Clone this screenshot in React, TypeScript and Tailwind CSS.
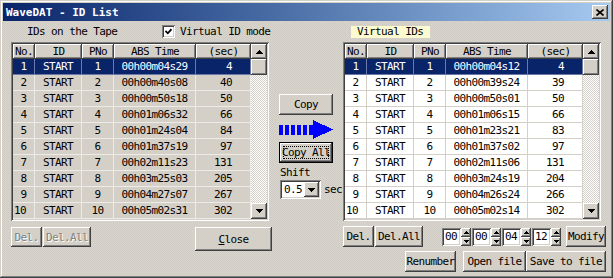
import React from "react";

const FONT = "font-['DejaVu_Sans_Mono',monospace] text-[11px] tracking-[-0.6px] leading-none whitespace-nowrap";
const RAISED =
  "shadow-[inset_-1px_-1px_#404040,inset_1px_1px_#ffffff,inset_-2px_-2px_#808080,inset_2px_2px_#d4d0c8]";
const SUNKEN =
  "shadow-[inset_1px_1px_#808080,inset_-1px_-1px_#ffffff,inset_2px_2px_#404040,inset_-2px_-2px_#d4d0c8]";
const CHECKER = "bg-[image:repeating-conic-gradient(#ffffff_0_25%,#d4d0c8_0_50%)] bg-[length:2px_2px]";
const DITHER = "bg-[image:repeating-conic-gradient(#d9d6cf_0_25%,#cfcbc3_0_50%)] bg-[length:2px_2px]";

const COLW = ["w-[22px]", "w-[47px]", "w-[32px]", "w-[82px]", "w-[55px]"];
const HEADERS = ["No.", "ID", "PNo", "ABS Time", "(sec)"];

type Row = [string, string, string, string, string];

const LEFT: Row[] = [
  ["1", "START", "1", "00h00m04s29", "4"],
  ["2", "START", "2", "00h00m40s08", "40"],
  ["3", "START", "3", "00h00m50s18", "50"],
  ["4", "START", "4", "00h01m06s32", "66"],
  ["5", "START", "5", "00h01m24s04", "84"],
  ["6", "START", "6", "00h01m37s19", "97"],
  ["7", "START", "7", "00h02m11s23", "131"],
  ["8", "START", "8", "00h03m25s03", "205"],
  ["9", "START", "9", "00h04m27s07", "267"],
  ["10", "START", "10", "00h05m02s31", "302"],
];

const RIGHT: Row[] = [
  ["1", "START", "1", "00h00m04s12", "4"],
  ["2", "START", "2", "00h00m39s24", "39"],
  ["3", "START", "3", "00h00m50s01", "50"],
  ["4", "START", "4", "00h01m06s15", "66"],
  ["5", "START", "5", "00h01m23s21", "83"],
  ["6", "START", "6", "00h01m37s02", "97"],
  ["7", "START", "7", "00h02m11s06", "131"],
  ["8", "START", "8", "00h03m24s19", "204"],
  ["9", "START", "9", "00h04m26s24", "266"],
  ["10", "START", "10", "00h05m02s14", "302"],
];

function UpTri() {
  return (
    <svg width="7" height="4" shapeRendering="crispEdges">
      <rect x="3" y="0" width="1" height="1" fill="#000" />
      <rect x="2" y="1" width="3" height="1" fill="#000" />
      <rect x="1" y="2" width="5" height="1" fill="#000" />
      <rect x="0" y="3" width="7" height="1" fill="#000" />
    </svg>
  );
}
function DownTri() {
  return (
    <svg width="7" height="4" shapeRendering="crispEdges">
      <rect x="0" y="0" width="7" height="1" fill="#000" />
      <rect x="1" y="1" width="5" height="1" fill="#000" />
      <rect x="2" y="2" width="3" height="1" fill="#000" />
      <rect x="3" y="3" width="1" height="1" fill="#000" />
    </svg>
  );
}
function SmallTri({ down }: { down?: boolean }) {
  return (
    <svg width="5" height="3" shapeRendering="crispEdges">
      {down ? (
        <>
          <rect x="0" y="0" width="5" height="1" fill="#000" />
          <rect x="1" y="1" width="3" height="1" fill="#000" />
          <rect x="2" y="2" width="1" height="1" fill="#000" />
        </>
      ) : (
        <>
          <rect x="2" y="0" width="1" height="1" fill="#000" />
          <rect x="1" y="1" width="3" height="1" fill="#000" />
          <rect x="0" y="2" width="5" height="1" fill="#000" />
        </>
      )}
    </svg>
  );
}

function Btn({
  children,
  className = "",
  disabled,
}: {
  children: React.ReactNode;
  className?: string;
  disabled?: boolean;
}) {
  return (
    <div
      className={`relative flex items-center justify-center bg-[#d4d0c8] ${RAISED} ${
        disabled ? "text-[#808080] [text-shadow:1px_1px_#ffffff]" : "text-black"
      } ${className}`}
    >
      {children}
    </div>
  );
}

function Table({ rows, white }: { rows: Row[]; white?: boolean }) {
  const line = white ? "border-[#d4d0c8]" : "border-[#ecebe7]";
  return (
    <div className={`w-[258px] h-[179px] p-[2px] flex ${SUNKEN} ${white ? "bg-white" : "bg-[#d4d0c8]"}`}>
      <div className="w-[238px] flex flex-col">
        <div className="flex h-[15px]">
          {HEADERS.map((h, i) => (
            <div key={h} className={`${COLW[i]} h-[15px] flex items-center justify-center bg-[#d4d0c8] ${RAISED}`}>
              {h}
            </div>
          ))}
        </div>
        {rows.map((r, ri) => {
          const sel = ri === 0;
          return (
            <div
              key={ri}
              className={`flex h-[16px] ${sel ? "bg-[#0a246a] text-white" : "text-black"}`}
            >
              {r.map((c, ci) => (
                <div
                  key={ci}
                  className={`${COLW[ci]} h-[16px] flex items-center border-r border-b ${
                    sel ? "border-[#6c78a8]" : line
                  } ${
                    ci === 4
                      ? "justify-end pr-[18px]"
                      : ci === 0 && c === "10"
                      ? "justify-start pl-[1px]"
                      : "justify-center"
                  }`}
                >
                  {c}
                </div>
              ))}
            </div>
          );
        })}
      </div>
      <div className="w-[16px] flex flex-col">
        <div className={`h-[15px] flex items-center justify-center bg-[#d4d0c8] ${RAISED}`}>
          <UpTri />
        </div>
        <div className={`h-[16px] bg-[#d4d0c8] ${RAISED}`} />
        <div className={`flex-1 ${CHECKER}`} />
        <div className={`h-[16px] flex items-center justify-center bg-[#d4d0c8] ${RAISED}`}>
          <DownTri />
        </div>
      </div>
    </div>
  );
}

function Spinner({ value }: { value: string }) {
  return (
    <div className="flex mr-[1px]">
      <div className={`w-[19px] h-[18px] bg-white ${SUNKEN} flex items-center pl-[3px]`}>{value}</div>
      <div className="w-[10px] h-[18px] flex flex-col">
        <div className={`h-[9px] flex items-center justify-center bg-[#d4d0c8] ${RAISED}`}>
          <SmallTri />
        </div>
        <div className={`h-[9px] flex items-center justify-center bg-[#d4d0c8] ${RAISED}`}>
          <SmallTri down />
        </div>
      </div>
    </div>
  );
}

function Arrow() {
  return (
    <svg width="54" height="19" shapeRendering="crispEdges">
      {[0, 6, 12, 18, 24, 30].map((x) => (
        <rect key={x} x={x} y="5" width="4" height="10" fill="#0000ff" />
      ))}
      <polygon points="34,0 54,9.5 34,19" fill="#0000ff" />
    </svg>
  );
}

export default function App() {
  return (
    <div
      className={`w-[613px] h-[278px] bg-[#d4d0c8] p-[3px] flex flex-col overflow-hidden ${FONT} shadow-[inset_-1px_-1px_#404040,inset_1px_1px_#d4d0c8,inset_-2px_-2px_#808080,inset_2px_2px_#ffffff]`}
    >
      {/* Title bar */}
      <div className="h-[18px] flex items-center bg-gradient-to-r from-[#0a246a] to-[#a6caf0] pl-[3px] pr-[2px]">
        <span className="font-bold text-white tracking-normal text-[11px]">WaveDAT - ID List</span>
        <div className={`ml-auto w-[16px] h-[14px] bg-[#d4d0c8] ${RAISED} flex items-center justify-center`}>
          <svg width="8" height="7">
            <path d="M0.5 0.5L7.5 6.5M7.5 0.5L0.5 6.5" stroke="#000" strokeWidth="1.6" />
          </svg>
        </div>
      </div>

      {/* Body */}
      <div className={`flex-1 flex pl-[8px] ${DITHER}`}>
        {/* Left column */}
        <div className="w-[261px] flex flex-col">
          <div className="h-[21px] flex items-center">
            <span className="ml-[16px] w-[135px]">IDs on the Tape</span>
            <div className={`w-[13px] h-[13px] bg-white ${SUNKEN} flex items-center justify-center`}>
              <svg width="7" height="7">
                <path d="M0.5 3L2.8 5.3L6.5 1.2" stroke="#000" strokeWidth="1.8" fill="none" />
              </svg>
            </div>
            <span className="ml-[5px]">Virtual ID mode</span>
          </div>
          <Table rows={LEFT} />
          <div className="mt-[6px] flex items-start">
            <Btn className="w-[31px] h-[20px]" disabled>
              Del.
            </Btn>
            <Btn className="ml-[1px] w-[48px] h-[20px]" disabled>
              Del.All
            </Btn>
            <Btn className="ml-auto w-[77px] h-[24px]">
              <span>
                <span className="underline">C</span>lose
              </span>
            </Btn>
          </div>
        </div>

        {/* Middle column */}
        <div className="ml-[7px] w-[64px] flex flex-col items-start pt-[73px]">
          <Btn className="w-[54px] h-[21px]">Copy</Btn>
          <div className="mt-[5px]">
            <Arrow />
          </div>
          <div className="mt-[3px] w-[54px] h-[21px] border border-black">
            <Btn className="w-full h-full">
              <div className="absolute inset-[3px] border border-dotted border-black" />
              <span>Copy All</span>
            </Btn>
          </div>
          <span className="mt-[3px] ml-[1px] h-[13px] flex items-center">Shift</span>
          <div className="mt-[1px] ml-[1px] flex items-center">
            <div className={`w-[41px] h-[19px] bg-white ${SUNKEN} p-[2px] flex items-center`}>
              <span className="pl-[2px] flex-1">0.5</span>
              <div className={`w-[15px] h-[15px] bg-[#d4d0c8] ${RAISED} flex items-center justify-center`}>
                <DownTri />
              </div>
            </div>
            <span className="ml-[3px]">sec</span>
          </div>
        </div>

        {/* Right column */}
        <div className="w-[263px] flex flex-col">
          <div className="h-[21px] flex items-center">
            <span className="ml-[8px] w-[79px] h-[12px] bg-[#fbfbcf] pl-[6px] flex items-center">Virtual IDs</span>
          </div>
          <Table rows={RIGHT} white />
          <div className="mt-[5px] flex items-center h-[21px]">
            <Btn className="w-[31px] h-[21px]">Del.</Btn>
            <Btn className="ml-[1px] w-[48px] h-[21px]">Del.All</Btn>
            <div className="ml-[19px] flex">
              <Spinner value="00" />
              <Spinner value="00" />
              <Spinner value="04" />
              <Spinner value="12" />
            </div>
            <Btn className="ml-[4px] w-[40px] h-[21px]">Modify</Btn>
          </div>
          <div className="mt-[4px] flex justify-end">
            <Btn className="w-[51px] h-[21px]">Renumber</Btn>
            <Btn className="ml-[7px] w-[63px] h-[21px]">Open file</Btn>
            <Btn className="w-[80px] h-[21px]">Save to file</Btn>
          </div>
        </div>
      </div>
    </div>
  );
}
